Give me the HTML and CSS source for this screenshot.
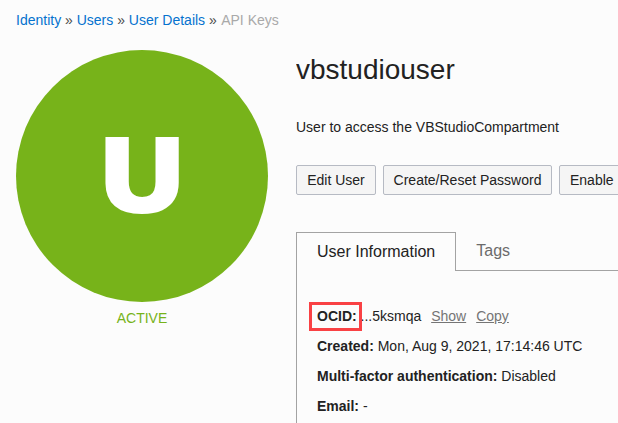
FILE: index.html
```html
<!DOCTYPE html>
<html lang="en">
<head>
<meta charset="utf-8">
<title>User Details</title>
<link rel="stylesheet" href="styles.css">
</head>
<body>
<nav class="crumbs"><a>Identity</a> » <a>Users</a> » <a>User Details</a> » <span class="current">API Keys</span></nav>
<div class="layout">
  <aside class="side">
    <div class="avatar"><span class="initial">U</span></div>
    <div class="status">ACTIVE</div>
  </aside>
  <main class="main">
    <h1>vbstudiouser</h1>
    <p class="desc">User to access the VBStudioCompartment</p>
    <div class="actions">
      <button class="edit">Edit User</button>
      <button class="reset">Create/Reset Password</button>
      <button class="enable">Enable</button>
    </div>
    <div class="tabs">
      <div class="tab active">User Information</div>
      <div class="tab">Tags</div>
    </div>
    <section class="panel">
      <div class="row"><b class="marked">OCID:</b> ...5ksmqa <a class="show">Show</a><a class="copy">Copy</a></div>
      <div class="row"><b>Created:</b> Mon, Aug 9, 2021, 17:14:46 UTC</div>
      <div class="row"><b>Multi-factor authentication:</b> Disabled</div>
      <div class="row"><b>Email:</b> -</div>
    </section>
  </main>
</div>
</body>
</html>
```
FILE: styles.css
```css
* { box-sizing: border-box; }
body { margin: 0; width: 618px; height: 423px; overflow: hidden; background: #fcfcfc; color: #222; font: 14px/20px "Liberation Sans", Arial, sans-serif; }
.crumbs { height: 50px; padding: 10px 16px; white-space: nowrap; color: #4a4a4a; }
.crumbs a { color: #0572ce; }
.crumbs .current { margin-left: 0.5px; color: #a9a9a9; }
.layout { display: flex; padding-left: 16px; }
.side { flex: 0 0 252px; margin-right: 28px; }
.avatar { display: flex; align-items: center; justify-content: center; width: 252px; height: 252px; border-radius: 50%; background: #77b31a; }
.initial { color: #fff; font: 800 106px/120px "Open Sans", sans-serif; transform: translateY(-4px) scaleX(1.13); }
.status { margin-top: 6px; text-align: center; color: #77b31a; }
.main { flex: 0 0 322px; overflow: hidden; height: 373px; }
h1 { margin: 0; font-size: 28px; line-height: 40px; font-weight: 400; }
.desc { margin: 27px 0 0; }
.actions { display: flex; gap: 7px; margin-top: 28px; }
button { flex: none; height: 30px; padding: 0; border: 1px solid #b6bac3; border-radius: 2px; background: #f5f5f5; color: #222; font: inherit; white-space: nowrap; }
.edit { width: 80px; }
.reset { width: 169px; }
.enable { width: 66px; padding-left: 10px; text-align: left; }
.tabs { display: flex; height: 39px; margin-top: 37px; }
.tab { flex: 1; padding: 9px 20px 0; border-bottom: 1px solid #a3a3a3; font-size: 16px; color: #6b6b6b; }
.tab.active { flex: 0 0 160px; border: 1px solid #a3a3a3; border-bottom: 0; color: #222; white-space: nowrap; }
.panel { height: 160px; padding: 30px 0 0 20px; border-left: 1px solid #a3a3a3; }
.row { height: 30px; line-height: 30px; white-space: nowrap; }
.marked { position: relative; }
.marked::after { content: ""; position: absolute; inset: -6px -5px -7px -8px; border: 3px solid #f94144; }
.show, .copy { margin-left: 6px; color: #757575; text-decoration: underline; }
.copy { margin-left: 10px; }
```
